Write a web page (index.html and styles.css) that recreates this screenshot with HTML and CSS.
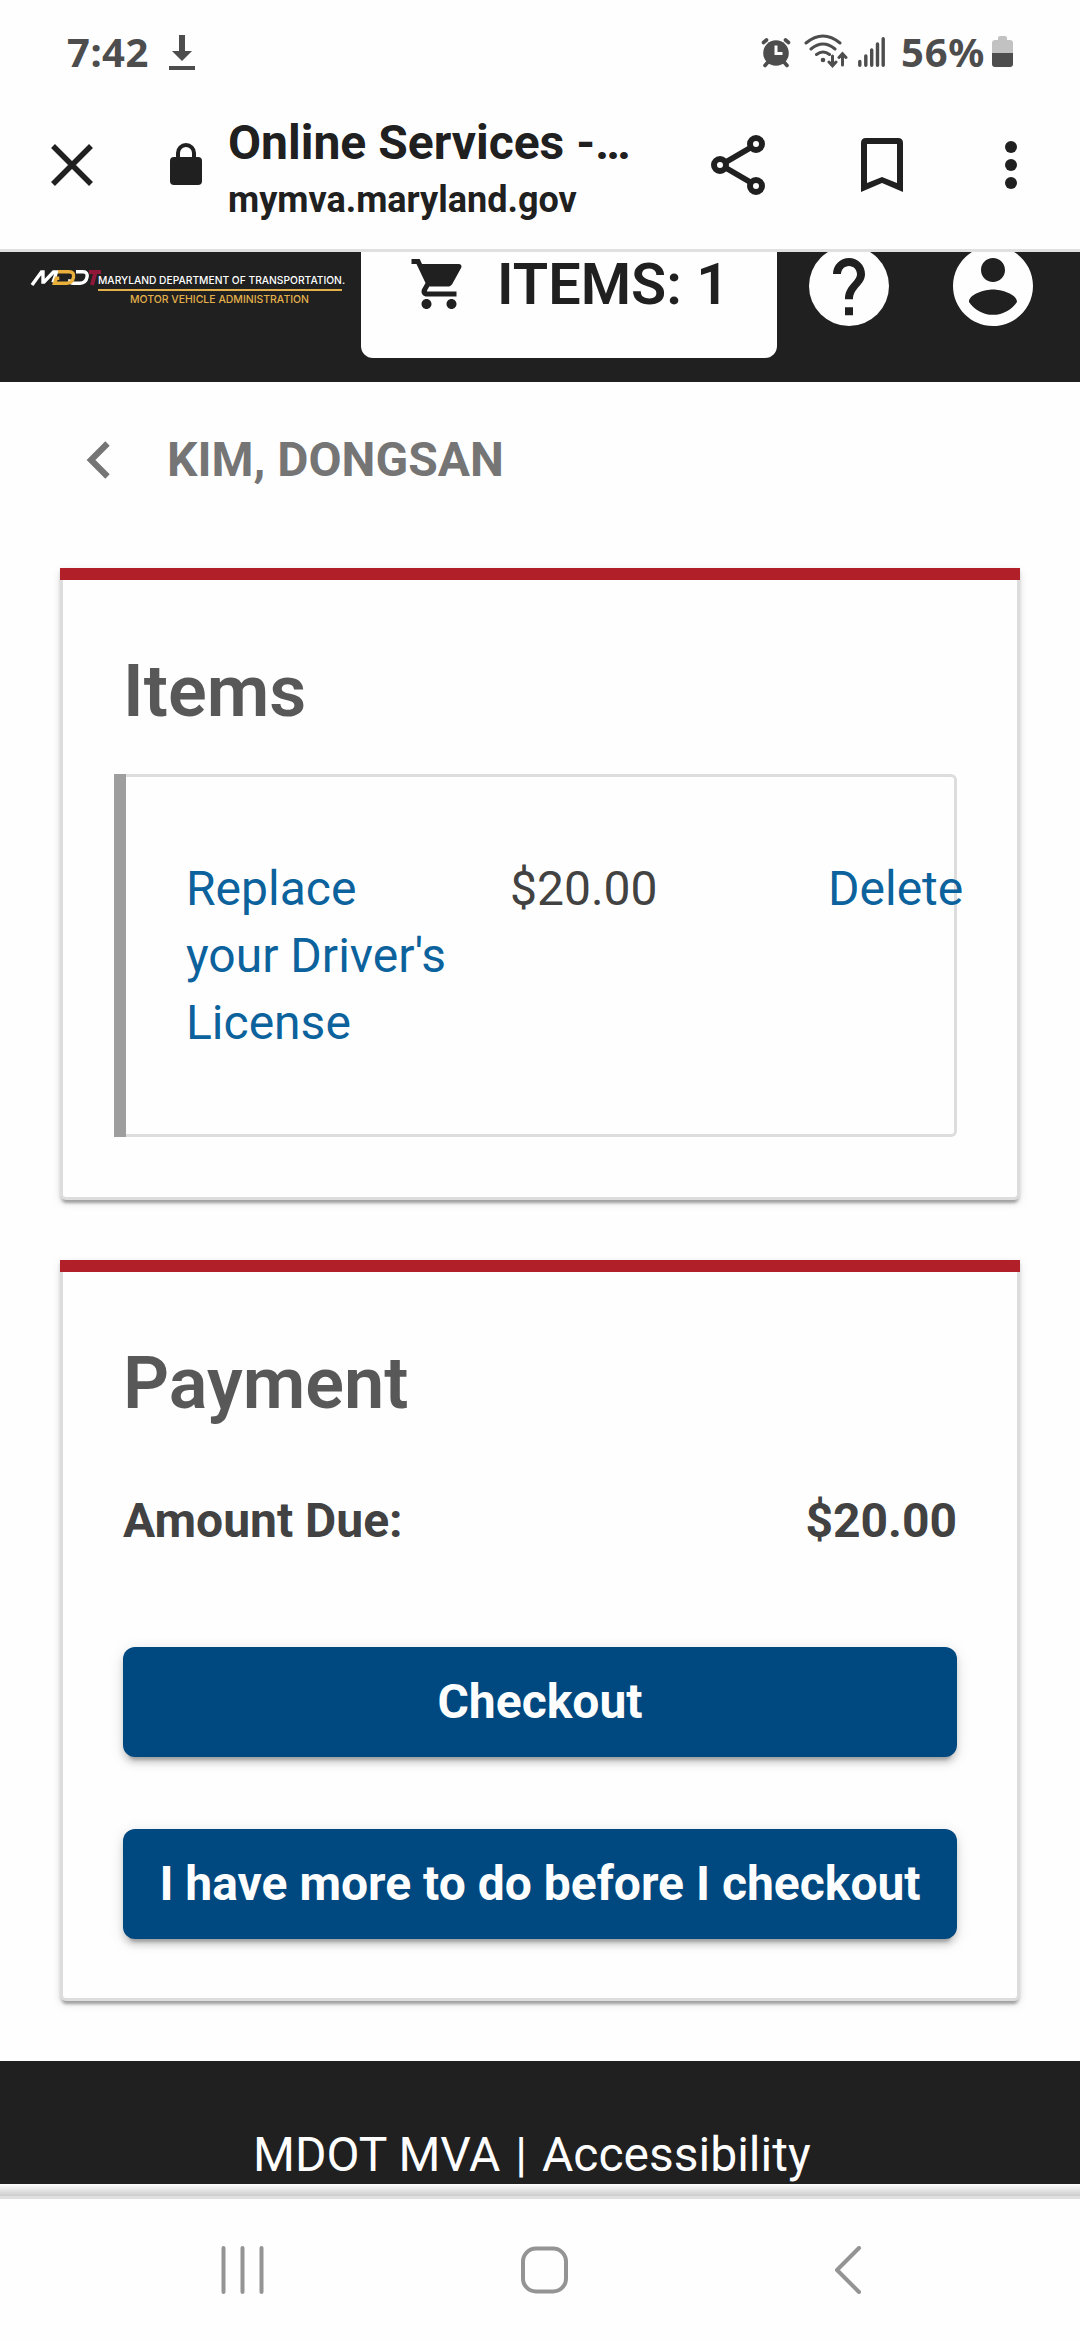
FILE: index.html
```html
<!DOCTYPE html>
<html lang="en">
<head>
<meta charset="utf-8">
<title>Online Services - MDOT MVA</title>
<link rel="stylesheet" href="styles.css">
</head>
<body>
<div class="screen">
  <div class="status-bar">
    <span class="clock">7:42</span>
    <svg class="download" width="26" height="36" viewBox="0 0 26 36"><path fill="#4d4d4d" d="M10 0h6v16h7L13 26 3 16h7zM0 31h26v4H0z"/></svg>
    <svg class="alarm" width="30" height="32" viewBox="0 0 30 32"><g fill="none" stroke="#4d4d4d" stroke-width="3.600" stroke-linecap="round"><path d="M2.500 5.500 5.500 3M27.500 5.500 24.500 3M7 25l-3 3.500M23 25l3 3.500"/></g><circle cx="15" cy="16" r="12.800" fill="#4d4d4d"/><path d="M15 8.500v8h6.500" fill="none" stroke="#fefefe" stroke-width="3"/></svg>
    <svg class="wifi" width="44" height="34" viewBox="0 0 44 34"><g fill="none" stroke="#4d4d4d" stroke-width="3" stroke-linecap="round"><path d="M2 9Q19-5 36 9M7 15Q19 5 31 15M12.500 20.500Q19 15.500 25.500 20.500"/><path d="M28.500 22v9M25 28l3.500 3.800L32 28M38.500 31v-10M35 23.500l3.500-3.800L42 23.500"/></g><circle cx="19" cy="26" r="2.300" fill="#4d4d4d"/></svg>
    <svg class="signal" width="27" height="30" viewBox="0 0 27 30"><path d="M1.800 24.500v3.700M7.800 19v9.200M13.700 13v15.200M19.500 7v21.200M25.200 1.800v26.400" stroke="#4d4d4d" stroke-width="3.400" stroke-linecap="round"/></svg>
    <span class="percent">56%</span>
    <svg class="battery" width="21" height="32" viewBox="0 0 21 32"><path fill="#c2c2c2" d="M6 2q0-2 2-2h5q2 0 2 2v2h3q3 0 3 3v10H0V7q0-3 3-3h3z"/><path fill="#4d4d4d" d="M0 17h21v11q0 3-3 3H3q-3 0-3-3z"/></svg>
  </div>

  <div class="browser-bar">
    <svg class="close" width="42" height="42" viewBox="0 0 42 42"><path d="M2 2l38 38M40 2 2 40" stroke="#202020" stroke-width="5.500"/></svg>
    <svg class="lock" width="32" height="42" viewBox="0 0 32 42"><path d="M8 16V10a8 8 0 0 1 16 0v6" fill="none" stroke="#202020" stroke-width="4"/><rect y="14" width="32" height="28" rx="4" fill="#202020"/></svg>
    <div class="page-id">
      <div class="page-title">Online Services -…</div>
      <div class="page-host">mymva.maryland.gov</div>
    </div>
    <svg class="share" width="54" height="60" viewBox="0 0 54 60"><g fill="none" stroke="#202020" stroke-width="6"><path d="M15 27 39 13M15 33l24 14" stroke-width="5.500"/><circle cx="9" cy="30" r="6"/><circle cx="45" cy="9" r="6"/><circle cx="45" cy="51" r="6"/></g></svg>
    <svg class="bookmark" width="42" height="54" viewBox="0 0 42 54"><path fill="#202020" fill-rule="evenodd" d="M5 0h32q5 0 5 5v49L21 45 0 54V5q0-5 5-5zM6 6v39l15-6 15 6V6z"/></svg>
    <svg class="more" width="12" height="48" viewBox="0 0 12 48"><g fill="#202020"><circle cx="6" cy="6" r="6"/><circle cx="6" cy="24" r="6"/><circle cx="6" cy="42" r="6"/></g></svg>
  </div>

  <header class="site-header">
    <div class="logo">
      <svg class="logo-mark" width="72" height="16" viewBox="0 0 72 16"><g fill="none" stroke-width="3.400"><path d="M2 15 11.500 2h1.500v10h1L23.500 2h3L23 12.500" stroke="#fff"/><path d="M46 1.800h7q5 0 4 5.500t-7 6h-7q-4 0-3-4" stroke="#fff"/><path d="M28 1.800h11q5.500 0 4.500 5.500t-6.500 6H24.500l1.800-5h3" stroke="#eab03c"/><path d="M59 2h12M65.500 2 62 15" stroke="#8f1838" stroke-width="4"/></g></svg>
      <div class="logo-text">
        <svg class="logo-name" width="250" height="18" viewBox="0 0 250 18"><text class="logo-line" x="0" y="13" textLength="247" lengthAdjust="spacingAndGlyphs" fill="#fff">MARYLAND DEPARTMENT OF TRANSPORTATION.</text></svg>
        <div class="logo-rule"></div>
        <svg class="logo-sub" width="182" height="18" viewBox="0 0 182 18"><text class="logo-line" x="0" y="12" textLength="179" lengthAdjust="spacingAndGlyphs" fill="#e3b04b">MOTOR VEHICLE ADMINISTRATION</text></svg>
      </div>
    </div>
    <div class="cart-button">
      <svg width="60" height="60" viewBox="0 0 24 24"><path fill="#202020" d="M7 18c-1.100 0-1.990.9-1.990 2S5.900 22 7 22s2-.9 2-2-.9-2-2-2zM1 2v2h2l3.600 7.590-1.350 2.450c-.16.280-.25.610-.25.960 0 1.100.9 2 2 2h12v-2H7.420c-.14 0-.25-.11-.25-.25l.03-.12.900-1.630h7.450c.75 0 1.410-.41 1.750-1.030l3.580-6.490c.08-.14.120-.31.120-.48 0-.55-.45-1-1-1H5.210l-.94-2H1zm16 16c-1.100 0-1.990.9-1.990 2s.89 2 1.990 2 2-.9 2-2-.9-2-2-2z"/></svg>
      <span class="cart-label">ITEMS: 1</span>
    </div>
    <svg class="help" width="96" height="96" viewBox="0 0 24 24"><circle cx="12" cy="12" r="10" fill="#fefefe"/><path fill="#202020" d="M11 17.300h2v2h-2zM12 5c-2.210 0-4 1.790-4 4h2c0-1.100.9-2 2-2s2 .9 2 2c0 2-3 2.750-3 6.300h2c0-2.800 3-3.550 3-6.300 0-2.210-1.790-4-4-4z"/></svg>
    <svg class="account" width="96" height="96" viewBox="0 0 24 24"><path fill="#fefefe" d="M12 2C6.480 2 2 6.480 2 12s4.480 10 10 10 10-4.480 10-10S17.520 2 12 2zm0 3c1.660 0 3 1.340 3 3s-1.340 3-3 3-3-1.340-3-3 1.340-3 3-3zm0 14.200c-2.500 0-4.710-1.280-6-3.220.03-1.990 4-3.080 6-3.080 1.990 0 5.970 1.090 6 3.080-1.290 1.940-3.500 3.220-6 3.220z"/></svg>
  </header>

  <main class="content">
    <div class="breadcrumb">
      <svg width="24" height="38" viewBox="0 0 24 38"><path d="M21.500 2.500 5 19l16.500 16.500" fill="none" stroke="#757575" stroke-width="6.200"/></svg>
      <span class="breadcrumb-name">KIM, DONGSAN</span>
    </div>

    <section class="card">
      <h2 class="card-title">Items</h2>
      <div class="item">
        <div class="item-bar"></div>
        <div class="item-box">
          <a class="item-name">Replace your Driver's License</a>
          <span class="item-price">$20.00</span>
          <a class="item-delete">Delete</a>
        </div>
      </div>
    </section>

    <section class="card card-payment">
      <h2 class="card-title">Payment</h2>
      <div class="amount"><span>Amount Due:</span><span>$20.00</span></div>
      <button class="button">Checkout</button>
      <button class="button">I have more to do before I checkout</button>
    </section>
  </main>

  <footer class="site-footer">MDOT MVA <span class="divider">|</span> Accessibility</footer>
  <div class="edge"></div>

  <nav class="nav-bar">
    <svg class="recents" width="43" height="48" viewBox="0 0 43 48"><path d="M2.500 2v44M21.500 2v44M40.500 2v44" stroke="#949494" stroke-width="4" stroke-linecap="round"/></svg>
    <svg class="home" width="47" height="48" viewBox="0 0 47 48"><rect x="2" y="2.500" width="43" height="43" rx="13" fill="none" stroke="#949494" stroke-width="4"/></svg>
    <svg class="back" width="27" height="48" viewBox="0 0 27 48"><path d="M25 2 3 24l22 22" fill="none" stroke="#949494" stroke-width="4" stroke-linecap="round" stroke-linejoin="round"/></svg>
  </nav>
</div>
</body>
</html>
```
FILE: styles.css
```css
* { box-sizing: border-box; }
body { margin: 0; background: #fefefe; font-family: Roboto, sans-serif; color: #424242; }
svg { display: block; flex: none; }
.screen { width: 1080px; height: 2340px; overflow: hidden; display: flex; flex-direction: column; }

.status-bar { height: 105px; flex: none; display: flex; align-items: flex-start; padding-left: 67px; color: #4d4d4d; }
.clock, .percent { font: 700 40px/48px "Noto Sans", sans-serif; white-space: nowrap; margin-top: 28px; flex: none; }
.clock { width: 102px; letter-spacing: .5px; }
.percent { width: 90px; margin-left: 16px; letter-spacing: .8px; }
.download { margin-top: 35px; }
.alarm { margin: 37px 0 0 566px; }
.wifi { margin: 34px 0 0 13px; }
.signal { margin: 37px 0 0 10px; }
.battery { margin: 36px 0 0 1px; }

.browser-bar { height: 147px; flex: none; display: flex; align-items: flex-start; border-bottom: 3px solid #e0e0e0; padding-left: 51px; color: #202020; }
.close { margin-top: 39px; }
.lock { margin: 38px 0 0 77px; }
.page-id { width: 457px; margin: 0 26px; font-weight: 700; white-space: nowrap; flex: none; }
.page-title { font-size: 48px; line-height: 56px; margin-top: 10px; }
.page-host { font-size: 36px; line-height: 48px; margin-top: 5px; }
.share { margin-top: 30px; }
.bookmark { margin: 33px 0 0 96px; }
.more { margin: 36px 0 0 102px; }

.site-header { height: 130px; flex: none; background: #202020; overflow: hidden; display: flex; align-items: flex-start; padding-left: 30px; }
.logo { display: flex; width: 331px; margin-top: 18px; }
.logo-mark { margin-right: -4px; }
.logo-text { padding-top: 1px; }
.logo-line { font: 500 11px Inter, sans-serif; }
.logo-rule { width: 244px; height: 1.500px; background: #e3b04b; }
.logo-sub { margin: 0 0 0 32px; }
.cart-button { width: 416px; height: 106px; flex: none; display: flex; background: #fefefe; color: #202020; border-radius: 0 0 12px 12px; padding: 2px 0 0 48px; }
.cart-label { font-size: 57.600px; font-weight: 600; line-height: 68px; margin: -3px 0 0 28px; white-space: nowrap; }
.help { margin: -14px 0 0 24px; }
.account { margin: -14px 0 0 48px; }

.content { height: 1679px; flex: none; padding: 0 60px; }
.breadcrumb { height: 186px; display: flex; padding: 59px 0 0 26px; color: #757575; }
.breadcrumb-name { font-size: 48px; line-height: 56px; font-weight: 700; margin: -9px 0 0 57px; }

.card { height: 632px; border: 3px solid #ddd; border-top: 0; border-radius: 0 0 6px 6px; background: #fefefe; padding: 0 60px; box-shadow: 0 6px 3px -3px rgba(0,0,0,.2), 0 3px 3px 0 rgba(0,0,0,.14), 0 3px 9px 0 rgba(0,0,0,.12); }
.card::before { content: ""; display: block; height: 12px; margin: 0 -63px; background: #b11f29; }
.card-payment { height: 741px; margin-top: 60px; }
.card-title { margin: 0; padding-top: 70px; font-size: 72px; line-height: 84px; font-weight: 600; color: #585858; }
.item { height: 363px; margin: 40px 0 0 -9px; display: flex; }
.item-bar { width: 12px; flex: none; background: #9e9e9e; }
.item-box { flex: 1; min-width: 0; border: 3px solid #ddd; border-left: 0; border-radius: 0 6px 6px 0; padding: 78px 0 0 60px; display: grid; grid-template-columns: 324px 318px auto; align-items: start; font-size: 48px; line-height: 67px; }
.item a { color: #0b629c; }
.item-name { width: 268px; }
.item-delete { white-space: nowrap; }
.amount { display: flex; justify-content: space-between; font-size: 48px; line-height: 56px; font-weight: 700; padding-top: 67px; }
.button { display: block; width: 100%; height: 110px; margin-top: 98px; border: 0; padding: 0; border-radius: 12px; background: #004980; color: #fefefe; font: 700 48px/56px Roboto, sans-serif; white-space: nowrap; box-shadow: 0 9px 3px -6px rgba(0,0,0,.2), 0 6px 6px 0 rgba(0,0,0,.14), 0 3px 15px 0 rgba(0,0,0,.12); }
.button + .button { margin-top: 72px; }

.site-footer { height: 123px; flex: none; background: #202020; color: #fefefe; font-size: 48px; line-height: 56px; padding: 66px 0 0 253px; white-space: nowrap; }
.divider { margin: 0 3px; }
.edge { height: 15px; flex: none; background: linear-gradient(#fefefe, #ccc 12px, #e0e0e0 12px); }

.nav-bar { flex: 1; display: flex; align-items: flex-start; padding: 47px 0 0 221px; background: #fefefe; }
.home { margin-left: 257px; }
.back { margin-left: 266px; }
```
